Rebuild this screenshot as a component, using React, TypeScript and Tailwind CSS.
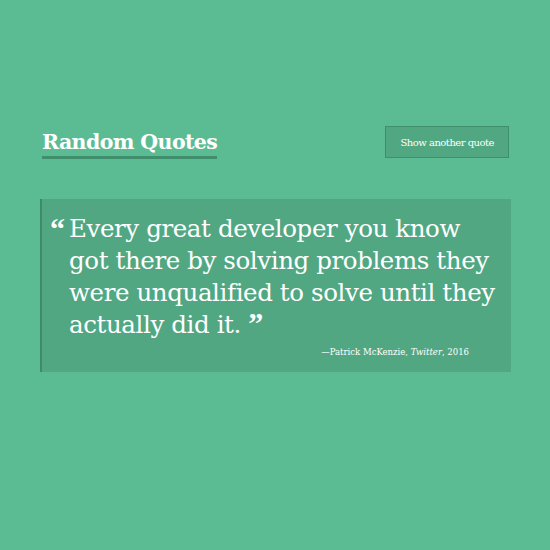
import React from "react";

export default function App() {
  return (
    <div
      className="w-[550px] h-[550px] bg-[#5bbc93] text-white overflow-hidden"
      style={{ fontFamily: '"DejaVu Serif", "Liberation Serif", serif' }}
    >
      <div className="pt-[126px] px-[40px]">
        <div className="flex items-start justify-between pl-[2px] pr-[1px]">
          <h1 className="text-[20.5px] leading-[26px] font-bold tracking-[-0.6px] border-b-[3px] border-[#3f8f6c] pb-[1px] mt-[3px]">
            Random Quotes
          </h1>
          <button className="h-[32px] px-[14px] border border-[#3f8f6c] bg-[#52a783] text-[10px] tracking-[-0.5px] text-white">
            Show another quote
          </button>
        </div>
        <div className="mt-[40px] border-l-[2px] border-[#3f8a68] bg-[#52a783] w-[471px] pt-[14px] pb-[13px] pl-[8px] pr-[8px]">
          <div className="flex">
            <span
              className="text-[30px] leading-[32px] w-[19px] shrink-0 font-bold"
              style={{ fontFamily: '"Liberation Serif", serif' }}
            >
              “
            </span>
            <p className="text-[24.5px] leading-[32px] tracking-[-0.4px] whitespace-nowrap">
              Every great developer you know
              <br />
              got there by solving problems they
              <br />
              were unqualified to solve until they
              <br />
              actually did it.{" "}
              <span
                className="text-[30px] leading-[20px] font-bold"
                style={{ fontFamily: '"Liberation Serif", serif' }}
              >
                ”
              </span>
            </p>
          </div>
          <div className="text-right text-[8.5px] leading-[14px] pr-[34px] mt-[4px]">
            —Patrick McKenzie, <em>Twitter</em>, 2016
          </div>
        </div>
      </div>
    </div>
  );
}
